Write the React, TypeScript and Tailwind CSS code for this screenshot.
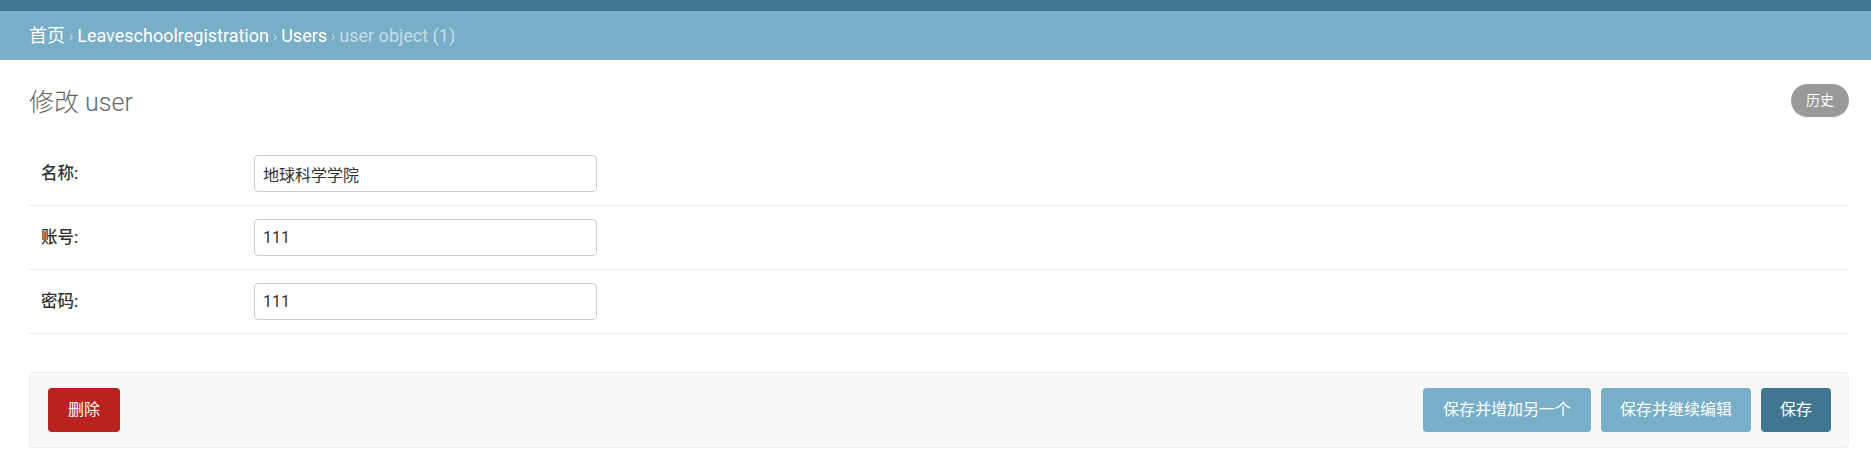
import React from 'react'

const FONT = 'font-[Roboto,"Noto_Sans_CJK_SC",sans-serif]'

const fields = [
  { label: '名称:', value: '地球科学学院' },
  { label: '账号:', value: '111' },
  { label: '密码:', value: '111' },
]

function Breadcrumbs() {
  return (
    <div className="h-[49px] bg-[#79aec8] flex items-center pl-[29px] pt-[1px] text-[18px] leading-none text-[#c4dce8]">
      <a className="text-white">首页</a>
      <span className="mx-[4px] text-[14px]">›</span>
      <a className="text-white">Leaveschoolregistration</a>
      <span className="mx-[4px] text-[14px]">›</span>
      <a className="text-white">Users</a>
      <span className="mx-[4px] text-[14px]">›</span>
      <span>user object (1)</span>
    </div>
  )
}

function FieldRow({ label, value }: { label: string; value: string }) {
  return (
    <div className="h-[64px] border-b border-[#eee] flex items-center pl-[12px]">
      <label className="w-[213px] text-[16.5px] font-medium text-[#333] pt-[2px]">{label}</label>
      <input
        defaultValue={value}
        className="w-[343px] h-[37px] border border-[#ccc] rounded-[4px] px-[8px] text-[16px] text-[#333] outline-none"
      />
    </div>
  )
}

export default function App() {
  return (
    <div className={`${FONT} bg-white w-full h-[455px] overflow-hidden`}>
      <div className="h-[11px] bg-[#417690]" />
      <Breadcrumbs />

      <div className="pl-[29px] pr-[22px] pt-[24px]">
        <div className="h-[33px] flex items-center justify-between">
          <h1 className="text-[25px] font-light text-[#666] leading-none pt-[3px]">修改 user</h1>
          <a className="h-[33px] px-[15px] rounded-full bg-[#999] text-white text-[14px] flex items-center">
            历史
          </a>
        </div>

        <div className="mt-[25px]">
          {fields.map((f) => (
            <FieldRow key={f.label} label={f.label} value={f.value} />
          ))}
        </div>

        <div className="mt-[38px] border border-[#eee] bg-[#f8f8f8] rounded-[4px] py-[15px] pl-[18px] pr-[17px] flex items-center justify-between">
          <button className="h-[44px] px-[20px] rounded-[4px] bg-[#ba2121] text-white text-[16px]">删除</button>
          <div className="flex items-center gap-[10px]">
            <button className="h-[44px] px-[20px] rounded-[4px] bg-[#79aec8] text-white text-[16px]">保存并增加另一个</button>
            <button className="h-[44px] px-[19px] rounded-[4px] bg-[#79aec8] text-white text-[16px]">保存并继续编辑</button>
            <button className="h-[44px] px-[19px] rounded-[4px] bg-[#417690] text-white text-[16px]">保存</button>
          </div>
        </div>
      </div>
    </div>
  )
}
